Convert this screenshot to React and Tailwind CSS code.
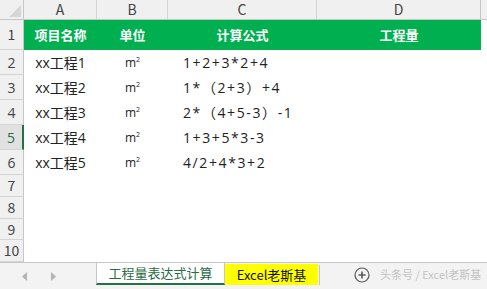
import React from "react";

const font = { fontFamily: '"Noto Sans CJK SC", "Noto Sans", sans-serif' };
const dataFont = { fontFamily: '"Open Sans", "Noto Sans CJK SC", sans-serif' };

const rows = [
  ["xx工程1", "1+2+3*2+4"],
  ["xx工程2", "1*（2+3）+4"],
  ["xx工程3", "2*（4+5-3）-1"],
  ["xx工程4", "1+3+5*3-3"],
  ["xx工程5", "4/2+4*3+2"],
];

function RowHead({ n, h, sel }) {
  return (
    <div
      className={`w-[24px] shrink-0 flex items-center justify-center border-b border-[#d4d4d4] text-[14px] ${
        sel ? "bg-[#e1e1e1] text-[#217346] border-r-2 border-r-[#217346]" : "bg-[#f0f0f0] text-[#444] border-r border-r-[#c6c6c6]"
      } ${h}`}
    >
      {n}
    </div>
  );
}

function Unit() {
  return (
    <span className="text-[12px] text-[#222] leading-none">
      m<span className="text-[7px] relative -top-[5px]">2</span>
    </span>
  );
}

export default function App() {
  return (
    <div className="w-[487px] h-[289px] overflow-hidden bg-white flex flex-col" style={font}>
      {/* column header */}
      <div className="flex h-[20px] shrink-0 bg-[#f0f0f0] border-b border-[#c6c6c6] text-[14px] text-[#444]">
        <div className="w-[24px] shrink-0 border-r border-[#c6c6c6] relative">
          <svg className="absolute right-[2px] bottom-[2px]" width="12" height="12" viewBox="0 0 12 12">
            <polygon points="12,0 12,12 0,12" fill="#d6d6d6" />
          </svg>
        </div>
        <div className="w-[73px] shrink-0 border-r border-[#d4d4d4] flex items-center justify-center">A</div>
        <div className="w-[71px] shrink-0 border-r border-[#d4d4d4] flex items-center justify-center">B</div>
        <div className="w-[149px] shrink-0 border-r border-[#d4d4d4] flex items-center justify-center">C</div>
        <div className="w-[164px] shrink-0 border-r border-[#c6c6c6] flex items-center justify-center">D</div>
        <div className="flex-1" />
      </div>

      {/* row 1 */}
      <div className="flex h-[30px] shrink-0">
        <RowHead n={1} h="h-[30px]" />
        <div className="w-[457px] shrink-0 bg-[#00b050] flex text-white font-bold text-[13px]">
          <div className="w-[73px] flex items-center justify-center">项目名称</div>
          <div className="w-[71px] flex items-center justify-center">单位</div>
          <div className="w-[149px] flex items-center justify-center">计算公式</div>
          <div className="w-[164px] flex items-center justify-center">工程量</div>
        </div>
        <div className="flex-1" />
      </div>

      {rows.map((r, i) => (
        <div key={i} className="flex h-[25px] shrink-0 text-[14px] text-[#222]" style={dataFont}>
          <RowHead n={i + 2} h="h-[25px]" sel={i === 3} />
          <div className="w-[73px] flex items-center justify-center">{r[0]}</div>
          <div className="w-[71px] flex items-center justify-center">
            <Unit />
          </div>
          <div className="w-[149px] flex items-center pl-[15px] whitespace-nowrap tracking-[1.6px]">{r[1]}</div>
        </div>
      ))}

      {[
        [7, "h-[22px]"],
        [8, "h-[22px]"],
        [9, "h-[21px]"],
        [10, "h-[22px]"],
      ].map(([n, h]) => (
        <div key={n} className={`flex shrink-0 ${h}`}>
          <RowHead n={n} h={h} />
        </div>
      ))}

      {/* tab bar */}
      <div className="flex-1 bg-[#f3f3f3] border-t border-[#c6c6c6] flex items-stretch">
        <div className="w-[96px] shrink-0 flex items-center pl-[22px] gap-[22px]">
          <svg width="6" height="9" viewBox="0 0 6 9">
            <polygon points="5,0 5,9 0,4.5" fill="#b4b4b4" />
          </svg>
          <svg width="6" height="9" viewBox="0 0 6 9">
            <polygon points="1,0 1,9 6,4.5" fill="#b4b4b4" />
          </svg>
        </div>
        <div className="w-[129px] shrink-0 h-[22px] bg-white border-l border-r border-[#c6c6c6] border-b-2 border-b-[#217346] flex items-center justify-center text-[13px] text-[#2a6b44]">
          工程量表达式计算
        </div>
        <div className="w-[95px] shrink-0 flex items-start pt-[1px]">
          <div className="w-[93px] h-[21px] bg-[#ffff00] flex items-center justify-center text-[13px] text-[#111]">
            Excel老斯基
          </div>
          <div className="w-px h-[20px] bg-[#c6c6c6] ml-[1px] mt-[1px]" />
        </div>
        <div className="w-[50px] shrink-0 flex items-center justify-end pb-[3px]">
          <svg width="16" height="16" viewBox="0 0 16 16">
            <circle cx="8" cy="8" r="7" fill="none" stroke="#5a5a5a" strokeWidth="1.2" />
            <path d="M8 4.5v7M4.5 8h7" stroke="#5a5a5a" strokeWidth="1.6" />
          </svg>
        </div>
        <div className="flex-1 flex items-center pl-[10px] pb-[3px] text-[11px] text-[#c4c4c4] whitespace-nowrap">
          头条号 / Excel老斯基
        </div>
      </div>
    </div>
  );
}
